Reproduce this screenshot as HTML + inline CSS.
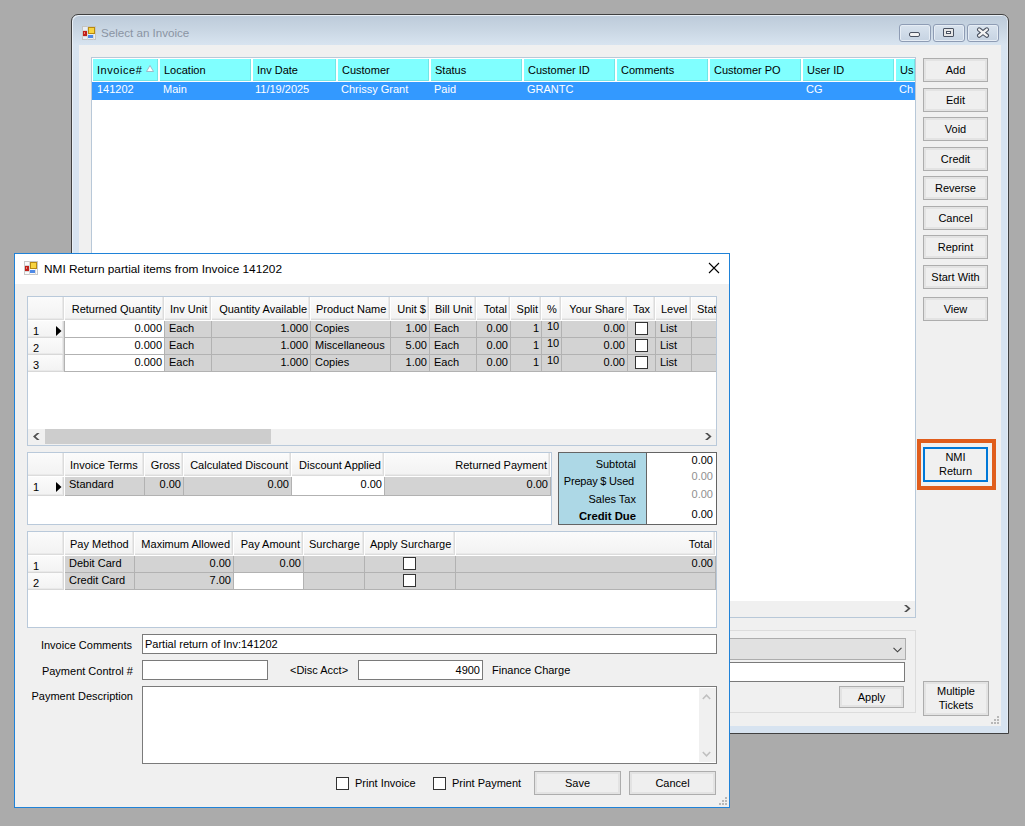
<!DOCTYPE html><html><head><meta charset="utf-8"><style>
html,body{margin:0;padding:0}
body{width:1025px;height:826px;overflow:hidden;position:relative;background:#ababab;font-family:"Liberation Sans",sans-serif;font-size:11px}
div{position:absolute;box-sizing:border-box}
.t{white-space:nowrap;line-height:13px}
</style></head><body>
<div style="left:71px;top:14px;width:938px;height:720px;border:1px solid #404040;border-radius:7px 7px 0 0;background:linear-gradient(#bdcbda 1px,#cad7e4 16px,#d8e4f0 30px,#d7e3f0 60px);box-shadow:inset 1px 1px 0 #e9f0f7,inset -1px 0 0 #e4ecf5"></div>
<div style="left:79px;top:45px;width:922px;height:681px;background:#f0f0f0;"></div>
<svg style="position:absolute;left:82px;top:26px" width="14" height="14" viewBox="0 0 14 14">
<rect x="0.5" y="0.5" width="13" height="13" fill="#e8eef4" stroke="#c4c4c4"/>
<rect x="6.5" y="1.5" width="6" height="6" fill="#f8d440" stroke="#b88a10" stroke-width="1"/>
<rect x="1" y="5" width="4" height="5" fill="#c0201a"/><rect x="2" y="6" width="1" height="2" fill="#f08070"/>
<rect x="6" y="9" width="5" height="3" fill="#4f8ae6"/><path d="M0.5 4.5 H5.5 M5.5 0.5 V13.5 M0.5 10.5 H5.5 M11.5 8.5 V13.5" stroke="#d8d8d8" stroke-width="1" fill="none"/>
</svg>
<div class="t" style="left:101px;top:26px;font-size:11.6px;color:#8a94a3;font-weight:normal;">Select an Invoice</div>
<div style="left:899px;top:24px;width:32px;height:18px;border:1px solid #8e9cb4;border-radius:3px;background:linear-gradient(#d9e3ee,#c6d3e2);box-shadow:inset 0 0 0 1px #e6edf5;"></div>
<div style="left:933px;top:24px;width:32px;height:18px;border:1px solid #8e9cb4;border-radius:3px;background:linear-gradient(#d9e3ee,#c6d3e2);box-shadow:inset 0 0 0 1px #e6edf5;"></div>
<div style="left:967px;top:24px;width:32px;height:18px;border:1px solid #8e9cb4;border-radius:3px;background:linear-gradient(#d9e3ee,#c6d3e2);box-shadow:inset 0 0 0 1px #e6edf5;"></div>
<div style="left:909px;top:32px;width:11px;height:5px;background:#f2f2f2;border:1px solid #4a5261;border-radius:2px;"></div>
<div style="left:943px;top:28px;width:11px;height:9px;background:#e6e6e6;border:1px solid #4a5261;border-radius:1px;"></div>
<div style="left:946px;top:31px;width:5px;height:3px;background:#fafafa;border:1px solid #4a5261;"></div>
<svg style="position:absolute;left:976px;top:27px" width="14" height="11" viewBox="0 0 14 11"><path d="M3.2 2.6 L10.8 8.6 M10.8 2.6 L3.2 8.6" stroke="#4a5261" stroke-width="4.4" stroke-linecap="round"/><path d="M3.2 2.6 L10.8 8.6 M10.8 2.6 L3.2 8.6" stroke="#f4f4f4" stroke-width="2.4" stroke-linecap="round"/></svg>
<div style="left:91px;top:57px;width:825px;height:561px;border:1px solid #b8c8d8;background:#fff;"></div>
<div style="left:92px;top:58px;width:823px;height:24px;background:#fff;"></div>
<div style="left:93px;top:59px;width:65px;height:22px;background:#80ffff;box-shadow:inset -1px -1px 0 #72e6e6;"></div>
<div style="left:160px;top:59px;width:91px;height:22px;background:#80ffff;box-shadow:inset -1px -1px 0 #72e6e6;"></div>
<div style="left:253px;top:59px;width:83px;height:22px;background:#80ffff;box-shadow:inset -1px -1px 0 #72e6e6;"></div>
<div style="left:338px;top:59px;width:91px;height:22px;background:#80ffff;box-shadow:inset -1px -1px 0 #72e6e6;"></div>
<div style="left:431px;top:59px;width:91px;height:22px;background:#80ffff;box-shadow:inset -1px -1px 0 #72e6e6;"></div>
<div style="left:524px;top:59px;width:91px;height:22px;background:#80ffff;box-shadow:inset -1px -1px 0 #72e6e6;"></div>
<div style="left:617px;top:59px;width:91px;height:22px;background:#80ffff;box-shadow:inset -1px -1px 0 #72e6e6;"></div>
<div style="left:710px;top:59px;width:91px;height:22px;background:#80ffff;box-shadow:inset -1px -1px 0 #72e6e6;"></div>
<div style="left:803px;top:59px;width:91px;height:22px;background:#80ffff;box-shadow:inset -1px -1px 0 #72e6e6;"></div>
<div style="left:896px;top:59px;width:19px;height:22px;background:#80ffff;box-shadow:inset -1px -1px 0 #72e6e6;"></div>
<div style="left:92px;top:82px;width:823px;height:18px;background:#3399ff;"></div>
<div style="left:92px;top:58px;width:823px;height:42px;overflow:hidden">
<div class="t" style="left:5px;top:6px;color:#000;letter-spacing:0.55px;">Invoice#</div>
<div class="t" style="left:5px;top:25px;color:#fff">141202</div>
<div class="t" style="left:72px;top:6px;color:#000;">Location</div>
<div class="t" style="left:71px;top:25px;color:#fff">Main</div>
<div class="t" style="left:165px;top:6px;color:#000;">Inv Date</div>
<div class="t" style="left:163px;top:25px;color:#fff">11/19/2025</div>
<div class="t" style="left:250px;top:6px;color:#000;">Customer</div>
<div class="t" style="left:249px;top:25px;color:#fff">Chrissy Grant</div>
<div class="t" style="left:343px;top:6px;color:#000;">Status</div>
<div class="t" style="left:342px;top:25px;color:#fff">Paid</div>
<div class="t" style="left:436px;top:6px;color:#000;">Customer ID</div>
<div class="t" style="left:435px;top:25px;color:#fff">GRANTC</div>
<div class="t" style="left:529px;top:6px;color:#000;">Comments</div>
<div class="t" style="left:622px;top:6px;color:#000;">Customer PO</div>
<div class="t" style="left:715px;top:6px;color:#000;">User ID</div>
<div class="t" style="left:714px;top:25px;color:#fff">CG</div>
<div class="t" style="left:808px;top:6px;color:#000;">Us</div>
<div class="t" style="left:807px;top:25px;color:#fff">Ch</div>
</div>
<svg style="position:absolute;left:146px;top:65px" width="8" height="7" viewBox="0 0 8 7"><path d="M4 0.5 L7.5 6.5 L0.5 6.5 Z" fill="#fff" stroke="#9ab" stroke-width="0.8"/></svg>
<div style="left:92px;top:601px;width:823px;height:16px;background:#f0f0f0;"></div>
<svg style="position:absolute;left:904px;top:605px" width="7" height="8" viewBox="0 0 7 8"><polygon points="0,0 2.6,0 6.6,3.5 2.6,7 0,7 4,3.5" fill="#505050"/></svg>
<div style="left:923px;top:58px;width:65px;height:24px;background:#efefef;border:1px solid #adadad;box-sizing:border-box;box-shadow:inset 0 0 0 2px #e3e3e3;"></div>
<div class="t" style="left:855.5px;width:200px;top:64px;font-size:11px;color:#000;font-weight:normal;text-align:center;">Add</div>
<div style="left:923px;top:88px;width:65px;height:24px;background:#efefef;border:1px solid #adadad;box-sizing:border-box;box-shadow:inset 0 0 0 2px #e3e3e3;"></div>
<div class="t" style="left:855.5px;width:200px;top:94px;font-size:11px;color:#000;font-weight:normal;text-align:center;">Edit</div>
<div style="left:923px;top:117px;width:65px;height:24px;background:#efefef;border:1px solid #adadad;box-sizing:border-box;box-shadow:inset 0 0 0 2px #e3e3e3;"></div>
<div class="t" style="left:855.5px;width:200px;top:123px;font-size:11px;color:#000;font-weight:normal;text-align:center;">Void</div>
<div style="left:923px;top:147px;width:65px;height:24px;background:#efefef;border:1px solid #adadad;box-sizing:border-box;box-shadow:inset 0 0 0 2px #e3e3e3;"></div>
<div class="t" style="left:855.5px;width:200px;top:153px;font-size:11px;color:#000;font-weight:normal;text-align:center;">Credit</div>
<div style="left:923px;top:176px;width:65px;height:24px;background:#efefef;border:1px solid #adadad;box-sizing:border-box;box-shadow:inset 0 0 0 2px #e3e3e3;"></div>
<div class="t" style="left:855.5px;width:200px;top:182px;font-size:11px;color:#000;font-weight:normal;text-align:center;">Reverse</div>
<div style="left:923px;top:206px;width:65px;height:24px;background:#efefef;border:1px solid #adadad;box-sizing:border-box;box-shadow:inset 0 0 0 2px #e3e3e3;"></div>
<div class="t" style="left:855.5px;width:200px;top:212px;font-size:11px;color:#000;font-weight:normal;text-align:center;">Cancel</div>
<div style="left:923px;top:235px;width:65px;height:24px;background:#efefef;border:1px solid #adadad;box-sizing:border-box;box-shadow:inset 0 0 0 2px #e3e3e3;"></div>
<div class="t" style="left:855.5px;width:200px;top:241px;font-size:11px;color:#000;font-weight:normal;text-align:center;">Reprint</div>
<div style="left:923px;top:265px;width:65px;height:24px;background:#efefef;border:1px solid #adadad;box-sizing:border-box;box-shadow:inset 0 0 0 2px #e3e3e3;"></div>
<div class="t" style="left:855.5px;width:200px;top:271px;font-size:11px;color:#000;font-weight:normal;text-align:center;">Start With</div>
<div style="left:923px;top:297px;width:65px;height:24px;background:#efefef;border:1px solid #adadad;box-sizing:border-box;box-shadow:inset 0 0 0 2px #e3e3e3;"></div>
<div class="t" style="left:855.5px;width:200px;top:303px;font-size:11px;color:#000;font-weight:normal;text-align:center;">View</div>
<div style="left:917px;top:439px;width:79px;height:51px;border:4px solid #e05d1c;"></div>
<div style="left:923px;top:447px;width:65px;height:35px;background:#f0f0f0;border:2px solid #0078d7;"></div>
<div class="t" style="left:855.5px;width:200px;top:451px;font-size:11px;color:#000;font-weight:normal;text-align:center;">NMI</div>
<div class="t" style="left:855.5px;width:200px;top:465px;font-size:11px;color:#000;font-weight:normal;text-align:center;">Return</div>
<div style="left:700px;top:630px;width:216px;height:83px;border:1px solid #dcdcdc;"></div>
<div style="left:700px;top:638px;width:206px;height:22px;background:#e1e1e1;border:1px solid #adadad;"></div>
<svg style="position:absolute;left:893px;top:647px" width="9" height="6" viewBox="0 0 9 6"><path d="M0.5 0.8 L4.5 4.8 L8.5 0.8" fill="none" stroke="#404040" stroke-width="1.1"/></svg>
<div style="left:700px;top:662px;width:205px;height:20px;background:#fff;border:1px solid #7a7a7a;"></div>
<div style="left:839px;top:686px;width:65px;height:22px;background:#efefef;border:1px solid #adadad;box-sizing:border-box;box-shadow:inset 0 0 0 2px #e3e3e3;"></div>
<div class="t" style="left:771.5px;width:200px;top:691px;font-size:11px;color:#000;font-weight:normal;text-align:center;">Apply</div>
<div style="left:923px;top:681px;width:66px;height:35px;background:#efefef;border:1px solid #adadad;box-sizing:border-box;box-shadow:inset 0 0 0 2px #e3e3e3;"></div>
<div class="t" style="left:856.0px;width:200px;top:685px;font-size:11px;color:#000;font-weight:normal;text-align:center;">Multiple</div>
<div class="t" style="left:856.0px;width:200px;top:699px;font-size:11px;color:#000;font-weight:normal;text-align:center;">Tickets</div>
<div style="left:997px;top:716px;width:2px;height:2px;background:#b8b8b8;"></div>
<div style="left:994px;top:719px;width:2px;height:2px;background:#b8b8b8;"></div>
<div style="left:997px;top:719px;width:2px;height:2px;background:#b8b8b8;"></div>
<div style="left:991px;top:722px;width:2px;height:2px;background:#b8b8b8;"></div>
<div style="left:994px;top:722px;width:2px;height:2px;background:#b8b8b8;"></div>
<div style="left:997px;top:722px;width:2px;height:2px;background:#b8b8b8;"></div>
<div style="left:14px;top:253px;width:716px;height:555px;border:1px solid #1f82d8;background:#f0f0f0;"></div>
<div style="left:15px;top:254px;width:714px;height:30px;background:#fff;"></div>
<svg style="position:absolute;left:24px;top:261px" width="14" height="14" viewBox="0 0 14 14">
<rect x="0.5" y="0.5" width="13" height="13" fill="#fafafa" stroke="#c8c8c8"/>
<rect x="6.5" y="1.5" width="6" height="6" fill="#f8d440" stroke="#b88a10" stroke-width="1"/>
<rect x="1" y="5" width="4" height="5" fill="#c0201a"/><rect x="2" y="6" width="1" height="2" fill="#f08070"/>
<rect x="6" y="9" width="5" height="3" fill="#4f8ae6"/><path d="M0.5 4.5 H5.5 M5.5 0.5 V13.5 M0.5 10.5 H5.5 M11.5 8.5 V13.5" stroke="#d8d8d8" stroke-width="1" fill="none"/>
</svg>
<div class="t" style="left:44px;top:263px;font-size:11.83px;color:#000;font-weight:normal;">NMI Return partial items from Invoice 141202</div>
<svg style="position:absolute;left:708px;top:262px" width="12" height="12" viewBox="0 0 12 12"><path d="M1 1 L11 11 M11 1 L1 11" stroke="#000" stroke-width="1.1"/></svg>
<div style="left:27px;top:296px;width:690px;height:150px;border:1px solid #b9c9da;background:#fff;"></div>
<div style="left:28px;top:297px;width:688px;height:148px;overflow:hidden">
<div style="left:0px;top:0px;width:36px;height:23px;background:linear-gradient(#fbfbfb,#f2f2f2);box-shadow:inset -1px -1px 0 #dcdcdc,inset -2px -2px 0 #e9e9e9"></div>
<div style="left:37px;top:0px;width:99px;height:23px;background:linear-gradient(#fbfbfb,#f2f2f2);box-shadow:inset -1px -1px 0 #dcdcdc,inset -2px -2px 0 #e9e9e9"></div>
<div class="t" style="left:37px;width:96px;text-align:right;top:6px">Returned Quantity</div>
<div style="left:137px;top:0px;width:46px;height:23px;background:linear-gradient(#fbfbfb,#f2f2f2);box-shadow:inset -1px -1px 0 #dcdcdc,inset -2px -2px 0 #e9e9e9"></div>
<div class="t" style="left:142px;top:6px">Inv Unit</div>
<div style="left:184px;top:0px;width:98px;height:23px;background:linear-gradient(#fbfbfb,#f2f2f2);box-shadow:inset -1px -1px 0 #dcdcdc,inset -2px -2px 0 #e9e9e9"></div>
<div class="t" style="left:184px;width:95px;text-align:right;top:6px">Quantity Available</div>
<div style="left:283px;top:0px;width:79px;height:23px;background:linear-gradient(#fbfbfb,#f2f2f2);box-shadow:inset -1px -1px 0 #dcdcdc,inset -2px -2px 0 #e9e9e9"></div>
<div class="t" style="left:288px;top:6px">Product Name</div>
<div style="left:363px;top:0px;width:38px;height:23px;background:linear-gradient(#fbfbfb,#f2f2f2);box-shadow:inset -1px -1px 0 #dcdcdc,inset -2px -2px 0 #e9e9e9"></div>
<div class="t" style="left:363px;width:35px;text-align:right;top:6px">Unit $</div>
<div style="left:402px;top:0px;width:46px;height:23px;background:linear-gradient(#fbfbfb,#f2f2f2);box-shadow:inset -1px -1px 0 #dcdcdc,inset -2px -2px 0 #e9e9e9"></div>
<div class="t" style="left:407px;top:6px">Bill Unit</div>
<div style="left:449px;top:0px;width:33px;height:23px;background:linear-gradient(#fbfbfb,#f2f2f2);box-shadow:inset -1px -1px 0 #dcdcdc,inset -2px -2px 0 #e9e9e9"></div>
<div class="t" style="left:449px;width:30px;text-align:right;top:6px">Total</div>
<div style="left:483px;top:0px;width:30px;height:23px;background:linear-gradient(#fbfbfb,#f2f2f2);box-shadow:inset -1px -1px 0 #dcdcdc,inset -2px -2px 0 #e9e9e9"></div>
<div class="t" style="left:483px;width:27px;text-align:right;top:6px">Split</div>
<div style="left:514px;top:0px;width:19px;height:23px;background:linear-gradient(#fbfbfb,#f2f2f2);box-shadow:inset -1px -1px 0 #dcdcdc,inset -2px -2px 0 #e9e9e9"></div>
<div class="t" style="left:519px;top:6px">%</div>
<div style="left:534px;top:0px;width:65px;height:23px;background:linear-gradient(#fbfbfb,#f2f2f2);box-shadow:inset -1px -1px 0 #dcdcdc,inset -2px -2px 0 #e9e9e9"></div>
<div class="t" style="left:534px;width:62px;text-align:right;top:6px">Your Share</div>
<div style="left:600px;top:0px;width:27px;height:23px;background:linear-gradient(#fbfbfb,#f2f2f2);box-shadow:inset -1px -1px 0 #dcdcdc,inset -2px -2px 0 #e9e9e9"></div>
<div class="t" style="left:605px;top:6px">Tax</div>
<div style="left:628px;top:0px;width:35px;height:23px;background:linear-gradient(#fbfbfb,#f2f2f2);box-shadow:inset -1px -1px 0 #dcdcdc,inset -2px -2px 0 #e9e9e9"></div>
<div class="t" style="left:633px;top:6px">Level</div>
<div style="left:664px;top:0px;width:68px;height:23px;background:linear-gradient(#fbfbfb,#f2f2f2);box-shadow:inset -1px -1px 0 #dcdcdc,inset -2px -2px 0 #e9e9e9"></div>
<div class="t" style="left:669px;top:6px">Status</div>
<div style="left:0px;top:24px;width:36px;height:17px;background:linear-gradient(#fbfbfb,#f2f2f2);box-shadow:inset -1px -1px 0 #d8d8d8,inset -2px -2px 0 #e9e9e9"></div>
<div style="left:36px;top:24px;width:1px;height:17px;background:#b2b2b2"></div>
<div class="t" style="left:5px;top:28px">1</div>
<svg style="position:absolute;left:28px;top:29px" width="6" height="10" viewBox="0 0 6 10"><path d="M0 0 L5.5 5 L0 10 Z" fill="#000"/></svg>
<div style="left:37px;top:24px;width:100px;height:17px;background:#fff;border-right:1px solid #b2b2b2;border-bottom:1px solid #b2b2b2"></div>
<div class="t" style="left:37px;width:97px;text-align:right;top:25px">0.000</div>
<div style="left:137px;top:24px;width:47px;height:17px;background:#d3d3d3;border-right:1px solid #b2b2b2;border-bottom:1px solid #b2b2b2"></div>
<div class="t" style="left:141px;top:25px">Each</div>
<div style="left:184px;top:24px;width:99px;height:17px;background:#d3d3d3;border-right:1px solid #b2b2b2;border-bottom:1px solid #b2b2b2"></div>
<div class="t" style="left:184px;width:96px;text-align:right;top:25px">1.000</div>
<div style="left:283px;top:24px;width:80px;height:17px;background:#d3d3d3;border-right:1px solid #b2b2b2;border-bottom:1px solid #b2b2b2"></div>
<div class="t" style="left:287px;top:25px">Copies</div>
<div style="left:363px;top:24px;width:39px;height:17px;background:#d3d3d3;border-right:1px solid #b2b2b2;border-bottom:1px solid #b2b2b2"></div>
<div class="t" style="left:363px;width:36px;text-align:right;top:25px">1.00</div>
<div style="left:402px;top:24px;width:47px;height:17px;background:#d3d3d3;border-right:1px solid #b2b2b2;border-bottom:1px solid #b2b2b2"></div>
<div class="t" style="left:406px;top:25px">Each</div>
<div style="left:449px;top:24px;width:34px;height:17px;background:#d3d3d3;border-right:1px solid #b2b2b2;border-bottom:1px solid #b2b2b2"></div>
<div class="t" style="left:449px;width:31px;text-align:right;top:25px">0.00</div>
<div style="left:483px;top:24px;width:31px;height:17px;background:#d3d3d3;border-right:1px solid #b2b2b2;border-bottom:1px solid #b2b2b2"></div>
<div class="t" style="left:483px;width:28px;text-align:right;top:25px">1</div>
<div style="left:514px;top:24px;width:20px;height:17px;background:#d3d3d3;border-right:1px solid #b2b2b2;border-bottom:1px solid #b2b2b2"></div>
<div class="t" style="left:519px;top:23px">10</div>
<div style="left:534px;top:24px;width:66px;height:17px;background:#d3d3d3;border-right:1px solid #b2b2b2;border-bottom:1px solid #b2b2b2"></div>
<div class="t" style="left:534px;width:63px;text-align:right;top:25px">0.00</div>
<div style="left:600px;top:24px;width:28px;height:17px;background:#d3d3d3;border-right:1px solid #b2b2b2;border-bottom:1px solid #b2b2b2"></div>
<div style="left:607px;top:25px;width:13px;height:13px;background:#fff;border:1px solid #333"></div>
<div style="left:628px;top:24px;width:36px;height:17px;background:#d3d3d3;border-right:1px solid #b2b2b2;border-bottom:1px solid #b2b2b2"></div>
<div class="t" style="left:632px;top:25px">List</div>
<div style="left:664px;top:24px;width:69px;height:17px;background:#d3d3d3;border-right:1px solid #b2b2b2;border-bottom:1px solid #b2b2b2"></div>
<div style="left:0px;top:41px;width:36px;height:17px;background:linear-gradient(#fbfbfb,#f2f2f2);box-shadow:inset -1px -1px 0 #d8d8d8,inset -2px -2px 0 #e9e9e9"></div>
<div style="left:36px;top:41px;width:1px;height:17px;background:#b2b2b2"></div>
<div class="t" style="left:5px;top:45px">2</div>
<div style="left:37px;top:41px;width:100px;height:17px;background:#fff;border-right:1px solid #b2b2b2;border-bottom:1px solid #b2b2b2"></div>
<div class="t" style="left:37px;width:97px;text-align:right;top:42px">0.000</div>
<div style="left:137px;top:41px;width:47px;height:17px;background:#d3d3d3;border-right:1px solid #b2b2b2;border-bottom:1px solid #b2b2b2"></div>
<div class="t" style="left:141px;top:42px">Each</div>
<div style="left:184px;top:41px;width:99px;height:17px;background:#d3d3d3;border-right:1px solid #b2b2b2;border-bottom:1px solid #b2b2b2"></div>
<div class="t" style="left:184px;width:96px;text-align:right;top:42px">1.000</div>
<div style="left:283px;top:41px;width:80px;height:17px;background:#d3d3d3;border-right:1px solid #b2b2b2;border-bottom:1px solid #b2b2b2"></div>
<div class="t" style="left:287px;top:42px">Miscellaneous</div>
<div style="left:363px;top:41px;width:39px;height:17px;background:#d3d3d3;border-right:1px solid #b2b2b2;border-bottom:1px solid #b2b2b2"></div>
<div class="t" style="left:363px;width:36px;text-align:right;top:42px">5.00</div>
<div style="left:402px;top:41px;width:47px;height:17px;background:#d3d3d3;border-right:1px solid #b2b2b2;border-bottom:1px solid #b2b2b2"></div>
<div class="t" style="left:406px;top:42px">Each</div>
<div style="left:449px;top:41px;width:34px;height:17px;background:#d3d3d3;border-right:1px solid #b2b2b2;border-bottom:1px solid #b2b2b2"></div>
<div class="t" style="left:449px;width:31px;text-align:right;top:42px">0.00</div>
<div style="left:483px;top:41px;width:31px;height:17px;background:#d3d3d3;border-right:1px solid #b2b2b2;border-bottom:1px solid #b2b2b2"></div>
<div class="t" style="left:483px;width:28px;text-align:right;top:42px">1</div>
<div style="left:514px;top:41px;width:20px;height:17px;background:#d3d3d3;border-right:1px solid #b2b2b2;border-bottom:1px solid #b2b2b2"></div>
<div class="t" style="left:519px;top:40px">10</div>
<div style="left:534px;top:41px;width:66px;height:17px;background:#d3d3d3;border-right:1px solid #b2b2b2;border-bottom:1px solid #b2b2b2"></div>
<div class="t" style="left:534px;width:63px;text-align:right;top:42px">0.00</div>
<div style="left:600px;top:41px;width:28px;height:17px;background:#d3d3d3;border-right:1px solid #b2b2b2;border-bottom:1px solid #b2b2b2"></div>
<div style="left:607px;top:42px;width:13px;height:13px;background:#fff;border:1px solid #333"></div>
<div style="left:628px;top:41px;width:36px;height:17px;background:#d3d3d3;border-right:1px solid #b2b2b2;border-bottom:1px solid #b2b2b2"></div>
<div class="t" style="left:632px;top:42px">List</div>
<div style="left:664px;top:41px;width:69px;height:17px;background:#d3d3d3;border-right:1px solid #b2b2b2;border-bottom:1px solid #b2b2b2"></div>
<div style="left:0px;top:58px;width:36px;height:17px;background:linear-gradient(#fbfbfb,#f2f2f2);box-shadow:inset -1px -1px 0 #d8d8d8,inset -2px -2px 0 #e9e9e9"></div>
<div style="left:36px;top:58px;width:1px;height:17px;background:#b2b2b2"></div>
<div class="t" style="left:5px;top:62px">3</div>
<div style="left:37px;top:58px;width:100px;height:17px;background:#fff;border-right:1px solid #b2b2b2;border-bottom:1px solid #b2b2b2"></div>
<div class="t" style="left:37px;width:97px;text-align:right;top:59px">0.000</div>
<div style="left:137px;top:58px;width:47px;height:17px;background:#d3d3d3;border-right:1px solid #b2b2b2;border-bottom:1px solid #b2b2b2"></div>
<div class="t" style="left:141px;top:59px">Each</div>
<div style="left:184px;top:58px;width:99px;height:17px;background:#d3d3d3;border-right:1px solid #b2b2b2;border-bottom:1px solid #b2b2b2"></div>
<div class="t" style="left:184px;width:96px;text-align:right;top:59px">1.000</div>
<div style="left:283px;top:58px;width:80px;height:17px;background:#d3d3d3;border-right:1px solid #b2b2b2;border-bottom:1px solid #b2b2b2"></div>
<div class="t" style="left:287px;top:59px">Copies</div>
<div style="left:363px;top:58px;width:39px;height:17px;background:#d3d3d3;border-right:1px solid #b2b2b2;border-bottom:1px solid #b2b2b2"></div>
<div class="t" style="left:363px;width:36px;text-align:right;top:59px">1.00</div>
<div style="left:402px;top:58px;width:47px;height:17px;background:#d3d3d3;border-right:1px solid #b2b2b2;border-bottom:1px solid #b2b2b2"></div>
<div class="t" style="left:406px;top:59px">Each</div>
<div style="left:449px;top:58px;width:34px;height:17px;background:#d3d3d3;border-right:1px solid #b2b2b2;border-bottom:1px solid #b2b2b2"></div>
<div class="t" style="left:449px;width:31px;text-align:right;top:59px">0.00</div>
<div style="left:483px;top:58px;width:31px;height:17px;background:#d3d3d3;border-right:1px solid #b2b2b2;border-bottom:1px solid #b2b2b2"></div>
<div class="t" style="left:483px;width:28px;text-align:right;top:59px">1</div>
<div style="left:514px;top:58px;width:20px;height:17px;background:#d3d3d3;border-right:1px solid #b2b2b2;border-bottom:1px solid #b2b2b2"></div>
<div class="t" style="left:519px;top:57px">10</div>
<div style="left:534px;top:58px;width:66px;height:17px;background:#d3d3d3;border-right:1px solid #b2b2b2;border-bottom:1px solid #b2b2b2"></div>
<div class="t" style="left:534px;width:63px;text-align:right;top:59px">0.00</div>
<div style="left:600px;top:58px;width:28px;height:17px;background:#d3d3d3;border-right:1px solid #b2b2b2;border-bottom:1px solid #b2b2b2"></div>
<div style="left:607px;top:59px;width:13px;height:13px;background:#fff;border:1px solid #333"></div>
<div style="left:628px;top:58px;width:36px;height:17px;background:#d3d3d3;border-right:1px solid #b2b2b2;border-bottom:1px solid #b2b2b2"></div>
<div class="t" style="left:632px;top:59px">List</div>
<div style="left:664px;top:58px;width:69px;height:17px;background:#d3d3d3;border-right:1px solid #b2b2b2;border-bottom:1px solid #b2b2b2"></div>
</div>
<div style="left:28px;top:429px;width:688px;height:16px;background:#f0f0f0;"></div>
<div style="left:45px;top:429px;width:226px;height:15px;background:#cdcdcd;"></div>
<svg style="position:absolute;left:33px;top:433px" width="7" height="8" viewBox="0 0 7 8"><polygon points="6.6,0 4,0 0,3.5 4,7 6.6,7 2.6,3.5" fill="#505050"/></svg>
<svg style="position:absolute;left:705px;top:433px" width="7" height="8" viewBox="0 0 7 8"><polygon points="0,0 2.6,0 6.6,3.5 2.6,7 0,7 4,3.5" fill="#505050"/></svg>
<div style="left:27px;top:452px;width:525px;height:73px;border:1px solid #b9c9da;background:#fff;"></div>
<div style="left:28px;top:453px;width:523px;height:71px;overflow:hidden">
<div style="left:0px;top:0px;width:36px;height:23px;background:linear-gradient(#fbfbfb,#f2f2f2);box-shadow:inset -1px -1px 0 #dcdcdc,inset -2px -2px 0 #e9e9e9"></div>
<div style="left:37px;top:0px;width:79px;height:23px;background:linear-gradient(#fbfbfb,#f2f2f2);box-shadow:inset -1px -1px 0 #dcdcdc,inset -2px -2px 0 #e9e9e9"></div>
<div class="t" style="left:42px;top:6px">Invoice Terms</div>
<div style="left:117px;top:0px;width:38px;height:23px;background:linear-gradient(#fbfbfb,#f2f2f2);box-shadow:inset -1px -1px 0 #dcdcdc,inset -2px -2px 0 #e9e9e9"></div>
<div class="t" style="left:117px;width:35px;text-align:right;top:6px">Gross</div>
<div style="left:156px;top:0px;width:107px;height:23px;background:linear-gradient(#fbfbfb,#f2f2f2);box-shadow:inset -1px -1px 0 #dcdcdc,inset -2px -2px 0 #e9e9e9"></div>
<div class="t" style="left:156px;width:104px;text-align:right;top:6px">Calculated Discount</div>
<div style="left:264px;top:0px;width:92px;height:23px;background:linear-gradient(#fbfbfb,#f2f2f2);box-shadow:inset -1px -1px 0 #dcdcdc,inset -2px -2px 0 #e9e9e9"></div>
<div class="t" style="left:264px;width:89px;text-align:right;top:6px">Discount Applied</div>
<div style="left:357px;top:0px;width:165px;height:23px;background:linear-gradient(#fbfbfb,#f2f2f2);box-shadow:inset -1px -1px 0 #dcdcdc,inset -2px -2px 0 #e9e9e9"></div>
<div class="t" style="left:357px;width:162px;text-align:right;top:6px">Returned Payment</div>
<div style="left:0px;top:24px;width:36px;height:19px;background:linear-gradient(#fbfbfb,#f2f2f2);box-shadow:inset -1px -1px 0 #d8d8d8,inset -2px -2px 0 #e9e9e9"></div>
<div class="t" style="left:5px;top:28px">1</div>
<svg style="position:absolute;left:28px;top:29px" width="6" height="10" viewBox="0 0 6 10"><path d="M0 0 L5.5 5 L0 10 Z" fill="#000"/></svg>
<div style="left:37px;top:24px;width:80px;height:19px;background:#d3d3d3;border-right:1px solid #b2b2b2;border-bottom:1px solid #b2b2b2"></div>
<div class="t" style="left:41px;top:25px">Standard</div>
<div style="left:117px;top:24px;width:39px;height:19px;background:#d3d3d3;border-right:1px solid #b2b2b2;border-bottom:1px solid #b2b2b2"></div>
<div class="t" style="left:117px;width:36px;text-align:right;top:25px">0.00</div>
<div style="left:156px;top:24px;width:108px;height:19px;background:#d3d3d3;border-right:1px solid #b2b2b2;border-bottom:1px solid #b2b2b2"></div>
<div class="t" style="left:156px;width:105px;text-align:right;top:25px">0.00</div>
<div style="left:264px;top:24px;width:93px;height:19px;background:#fff;border-right:1px solid #b2b2b2;border-bottom:1px solid #b2b2b2"></div>
<div class="t" style="left:264px;width:90px;text-align:right;top:25px">0.00</div>
<div style="left:357px;top:24px;width:166px;height:19px;background:#d3d3d3;border-right:1px solid #b2b2b2;border-bottom:1px solid #b2b2b2"></div>
<div class="t" style="left:357px;width:163px;text-align:right;top:25px">0.00</div>
</div>
<div style="left:558px;top:452px;width:159px;height:73px;border:1px solid #646464;background:#fff;"></div>
<div style="left:559px;top:453px;width:88px;height:71px;background:#add8e6;border-right:1px solid #646464;"></div>
<div class="t" style="right:389px;top:458px;font-size:11px;color:#000;font-weight:normal;text-align:right;">Subtotal</div>
<div class="t" style="right:391px;top:475px;font-size:11px;color:#000;font-weight:normal;text-align:right;letter-spacing:-0.2px;">Prepay $ Used</div>
<div class="t" style="right:389px;top:493px;font-size:11px;color:#000;font-weight:normal;text-align:right;">Sales Tax</div>
<div class="t" style="right:389px;top:510px;font-size:11.3px;color:#000;font-weight:bold;text-align:right;">Credit Due</div>
<div class="t" style="right:312px;top:454px;font-size:11px;color:#000;font-weight:normal;text-align:right;">0.00</div>
<div class="t" style="right:312px;top:470px;font-size:11px;color:#909090;font-weight:normal;text-align:right;">0.00</div>
<div class="t" style="right:312px;top:488px;font-size:11px;color:#909090;font-weight:normal;text-align:right;">0.00</div>
<div class="t" style="right:312px;top:508px;font-size:11px;color:#000;font-weight:normal;text-align:right;">0.00</div>
<div style="left:27px;top:531px;width:690px;height:97px;border:1px solid #b9c9da;background:#fff;"></div>
<div style="left:28px;top:532px;width:688px;height:95px;overflow:hidden">
<div style="left:0px;top:0px;width:36px;height:23px;background:linear-gradient(#fbfbfb,#f2f2f2);box-shadow:inset -1px -1px 0 #dcdcdc,inset -2px -2px 0 #e9e9e9"></div>
<div style="left:37px;top:0px;width:69px;height:23px;background:linear-gradient(#fbfbfb,#f2f2f2);box-shadow:inset -1px -1px 0 #dcdcdc,inset -2px -2px 0 #e9e9e9"></div>
<div class="t" style="left:42px;top:6px">Pay Method</div>
<div style="left:107px;top:0px;width:98px;height:23px;background:linear-gradient(#fbfbfb,#f2f2f2);box-shadow:inset -1px -1px 0 #dcdcdc,inset -2px -2px 0 #e9e9e9"></div>
<div class="t" style="left:107px;width:95px;text-align:right;top:6px">Maximum Allowed</div>
<div style="left:206px;top:0px;width:69px;height:23px;background:linear-gradient(#fbfbfb,#f2f2f2);box-shadow:inset -1px -1px 0 #dcdcdc,inset -2px -2px 0 #e9e9e9"></div>
<div class="t" style="left:206px;width:66px;text-align:right;top:6px">Pay Amount</div>
<div style="left:276px;top:0px;width:60px;height:23px;background:linear-gradient(#fbfbfb,#f2f2f2);box-shadow:inset -1px -1px 0 #dcdcdc,inset -2px -2px 0 #e9e9e9"></div>
<div class="t" style="left:281px;top:6px">Surcharge</div>
<div style="left:337px;top:0px;width:90px;height:23px;background:linear-gradient(#fbfbfb,#f2f2f2);box-shadow:inset -1px -1px 0 #dcdcdc,inset -2px -2px 0 #e9e9e9"></div>
<div class="t" style="left:342px;top:6px">Apply Surcharge</div>
<div style="left:428px;top:0px;width:259px;height:23px;background:linear-gradient(#fbfbfb,#f2f2f2);box-shadow:inset -1px -1px 0 #dcdcdc,inset -2px -2px 0 #e9e9e9"></div>
<div class="t" style="left:428px;width:256px;text-align:right;top:6px">Total</div>
<div style="left:0px;top:24px;width:36px;height:17px;background:linear-gradient(#fbfbfb,#f2f2f2);box-shadow:inset -1px -1px 0 #d8d8d8,inset -2px -2px 0 #e9e9e9"></div>
<div class="t" style="left:5px;top:28px">1</div>
<div style="left:37px;top:24px;width:70px;height:17px;background:#d3d3d3;border-right:1px solid #b2b2b2;border-bottom:1px solid #b2b2b2"></div>
<div class="t" style="left:41px;top:25px">Debit Card</div>
<div style="left:107px;top:24px;width:99px;height:17px;background:#d3d3d3;border-right:1px solid #b2b2b2;border-bottom:1px solid #b2b2b2"></div>
<div class="t" style="left:107px;width:96px;text-align:right;top:25px">0.00</div>
<div style="left:206px;top:24px;width:70px;height:17px;background:#d3d3d3;border-right:1px solid #b2b2b2;border-bottom:1px solid #b2b2b2"></div>
<div class="t" style="left:206px;width:67px;text-align:right;top:25px">0.00</div>
<div style="left:276px;top:24px;width:61px;height:17px;background:#d3d3d3;border-right:1px solid #b2b2b2;border-bottom:1px solid #b2b2b2"></div>
<div style="left:337px;top:24px;width:91px;height:17px;background:#d3d3d3;border-right:1px solid #b2b2b2;border-bottom:1px solid #b2b2b2"></div>
<div style="left:375px;top:25px;width:13px;height:13px;background:#fff;border:1px solid #333"></div>
<div style="left:428px;top:24px;width:260px;height:17px;background:#d3d3d3;border-right:1px solid #b2b2b2;border-bottom:1px solid #b2b2b2"></div>
<div class="t" style="left:428px;width:257px;text-align:right;top:25px">0.00</div>
<div style="left:0px;top:41px;width:36px;height:17px;background:linear-gradient(#fbfbfb,#f2f2f2);box-shadow:inset -1px -1px 0 #d8d8d8,inset -2px -2px 0 #e9e9e9"></div>
<div class="t" style="left:5px;top:45px">2</div>
<div style="left:37px;top:41px;width:70px;height:17px;background:#d3d3d3;border-right:1px solid #b2b2b2;border-bottom:1px solid #b2b2b2"></div>
<div class="t" style="left:41px;top:42px">Credit Card</div>
<div style="left:107px;top:41px;width:99px;height:17px;background:#d3d3d3;border-right:1px solid #b2b2b2;border-bottom:1px solid #b2b2b2"></div>
<div class="t" style="left:107px;width:96px;text-align:right;top:42px">7.00</div>
<div style="left:206px;top:41px;width:70px;height:17px;background:#fff;border-right:1px solid #b2b2b2;border-bottom:1px solid #b2b2b2"></div>
<div style="left:276px;top:41px;width:61px;height:17px;background:#d3d3d3;border-right:1px solid #b2b2b2;border-bottom:1px solid #b2b2b2"></div>
<div style="left:337px;top:41px;width:91px;height:17px;background:#d3d3d3;border-right:1px solid #b2b2b2;border-bottom:1px solid #b2b2b2"></div>
<div style="left:375px;top:42px;width:13px;height:13px;background:#fff;border:1px solid #333"></div>
<div style="left:428px;top:41px;width:260px;height:17px;background:#d3d3d3;border-right:1px solid #b2b2b2;border-bottom:1px solid #b2b2b2"></div>
</div>
<div class="t" style="right:893px;top:639px;font-size:11px;color:#000;font-weight:normal;text-align:right;">Invoice Comments</div>
<div style="left:142px;top:634px;width:575px;height:20px;background:#fff;border:1px solid #7a7a7a;"></div>
<div class="t" style="left:145px;top:638px;font-size:11px;color:#000;font-weight:normal;">Partial return of Inv:141202</div>
<div class="t" style="right:892px;top:665px;font-size:11px;color:#000;font-weight:normal;text-align:right;">Payment Control #</div>
<div style="left:142px;top:660px;width:126px;height:20px;background:#fff;border:1px solid #7a7a7a;"></div>
<div class="t" style="left:290px;top:664px;font-size:11px;color:#000;font-weight:normal;">&lt;Disc Acct&gt;</div>
<div style="left:358px;top:660px;width:125px;height:20px;background:#fff;border:1px solid #7a7a7a;"></div>
<div class="t" style="right:545px;top:664px;font-size:11px;color:#000;font-weight:normal;text-align:right;">4900</div>
<div class="t" style="left:492px;top:664px;font-size:11px;color:#000;font-weight:normal;">Finance Charge</div>
<div class="t" style="right:892px;top:690px;font-size:11px;color:#000;font-weight:normal;text-align:right;">Payment Description</div>
<div style="left:142px;top:686px;width:575px;height:78px;background:#fff;border:1px solid #7a7a7a;"></div>
<div style="left:699px;top:688px;width:17px;height:74px;background:#f0f0f0;"></div>
<svg style="position:absolute;left:702px;top:694px" width="9" height="6" viewBox="0 0 9 6"><path d="M0.8 5 L4.5 1.2 L8.2 5" fill="none" stroke="#c0c0c0" stroke-width="1.6"/></svg>
<svg style="position:absolute;left:702px;top:751px" width="9" height="6" viewBox="0 0 9 6"><path d="M0.8 1 L4.5 4.8 L8.2 1" fill="none" stroke="#c0c0c0" stroke-width="1.6"/></svg>
<div style="left:336px;top:777px;width:13px;height:13px;background:#fff;border:1px solid #333;box-sizing:border-box;"></div>
<div class="t" style="left:355px;top:777px;font-size:11px;color:#000;font-weight:normal;">Print Invoice</div>
<div style="left:433px;top:777px;width:13px;height:13px;background:#fff;border:1px solid #333;box-sizing:border-box;"></div>
<div class="t" style="left:452px;top:777px;font-size:11px;color:#000;font-weight:normal;">Print Payment</div>
<div style="left:534px;top:771px;width:87px;height:24px;background:#efefef;border:1px solid #adadad;box-sizing:border-box;box-shadow:inset 0 0 0 2px #e3e3e3;"></div>
<div class="t" style="left:477.5px;width:200px;top:777px;font-size:11px;color:#000;font-weight:normal;text-align:center;">Save</div>
<div style="left:629px;top:771px;width:87px;height:24px;background:#efefef;border:1px solid #adadad;box-sizing:border-box;box-shadow:inset 0 0 0 2px #e3e3e3;"></div>
<div class="t" style="left:572.5px;width:200px;top:777px;font-size:11px;color:#000;font-weight:normal;text-align:center;">Cancel</div>
<div style="left:725px;top:797px;width:2px;height:2px;background:#b8b8b8;"></div>
<div style="left:722px;top:800px;width:2px;height:2px;background:#b8b8b8;"></div>
<div style="left:725px;top:800px;width:2px;height:2px;background:#b8b8b8;"></div>
<div style="left:719px;top:803px;width:2px;height:2px;background:#b8b8b8;"></div>
<div style="left:722px;top:803px;width:2px;height:2px;background:#b8b8b8;"></div>
<div style="left:725px;top:803px;width:2px;height:2px;background:#b8b8b8;"></div>
</body></html>
